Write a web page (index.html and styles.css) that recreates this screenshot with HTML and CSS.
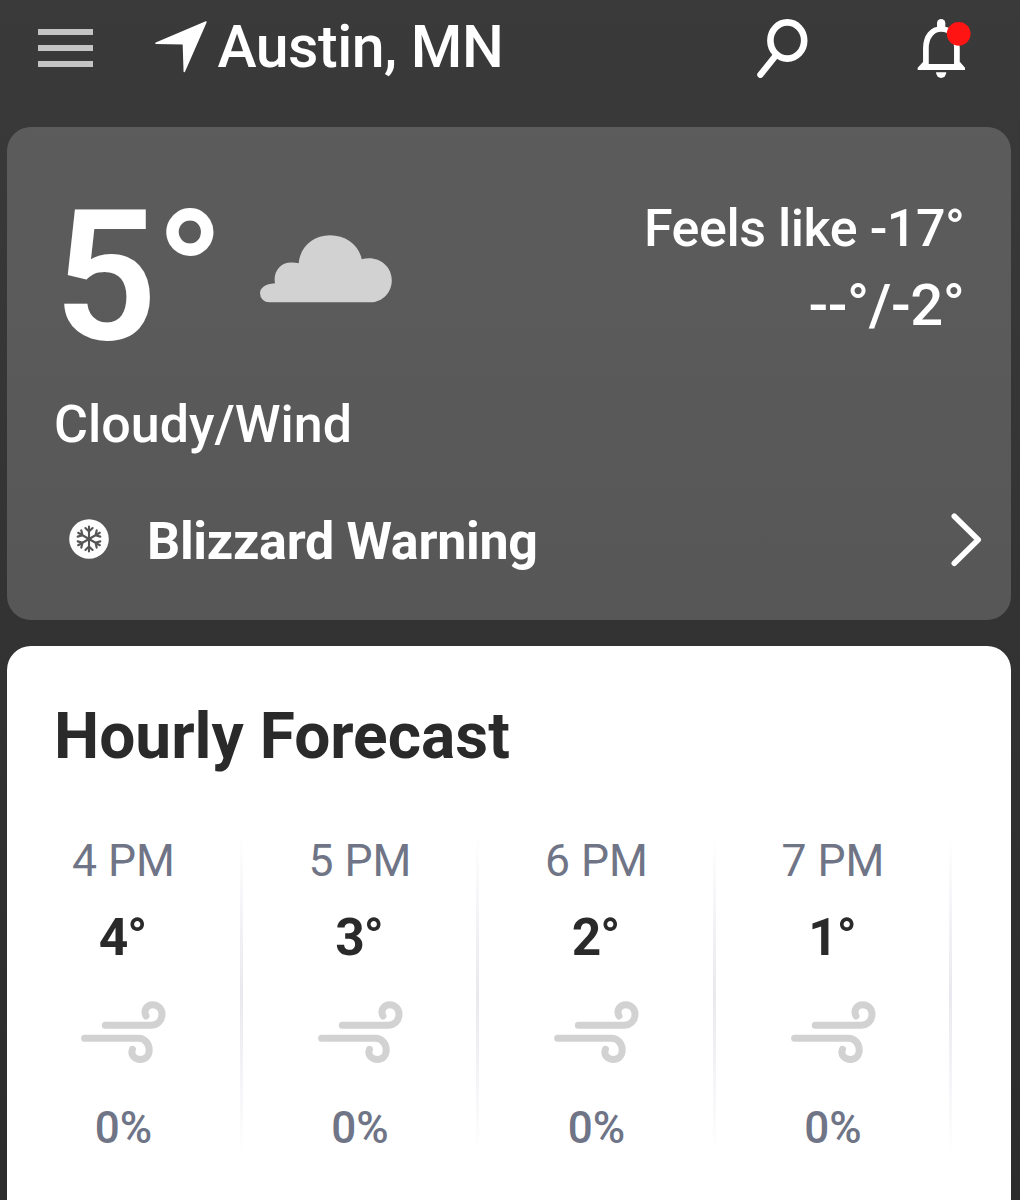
FILE: index.html
```html
<!DOCTYPE html>
<html lang="en">
<head>
  <meta charset="UTF-8" />
  <meta name="viewport" content="width=device-width, initial-scale=1.0"/>
  <title>Austin, MN Weather</title>
  <link rel="stylesheet" href="styles.css">
</head>
<body>

  <!-- shared icons -->
  <svg class="sprite" width="0" height="0">
    <symbol id="wind" viewBox="0 0 85 62">
      <path d="M24.3 24.3H70C76.500 24.300 81 19.500 81 13.300C81 7.800 77 3.700 71.800 3.700C66.300 3.700 62 8.700 65 15M3.600 37.300H57.500C64 37.300 68.200 43 68.200 49C68.200 54.500 64.500 58.400 59.300 58.400C53.800 58.400 49.200 54 51.500 48.300" fill="none" stroke="#d2d2d2" stroke-width="7" stroke-linecap="round"/>
    </symbol>
    <symbol id="arm" viewBox="-20 -20 40 40">
      <path d="M0 0V-12.500M-3.600 -11L0 -7.500L3.600 -11"/>
    </symbol>
  </svg>

  <header class="topbar">
    <button class="menu" aria-label="Menu"><span></span><span></span><span></span></button>
    <svg class="locate" width="52" height="52" viewBox="0 0 52 52">
      <path d="M1 22.200L51 1L29.300 50.500L28.400 22.800Z" fill="#fff" stroke="#fff" stroke-width="1.500" stroke-linejoin="round"/>
    </svg>
    <h1>Austin, MN</h1>
    <svg class="search" width="51" height="60" viewBox="0 0 51 60">
      <ellipse cx="30.300" cy="21.500" rx="16.900" ry="18.100" fill="none" stroke="#fff" stroke-width="6.600"/>
      <path d="M18 37.500L3.400 55.700" stroke="#fff" stroke-width="6.300" stroke-linecap="round"/>
    </svg>
    <svg class="bell" width="54" height="60" viewBox="0 0 54 60">
      <path d="M8.900 47V29C8.900 18 15 10 24.300 10S39.900 18 39.900 29V47" fill="none" stroke="#fff" stroke-width="5.700"/>
      <path d="M.7 51V48.700L6 43L11.700 45H37L43 43L48 48.700V51Z" fill="#fff"/>
      <path d="M20 11V4.200A4.150 4.200 0 0 1 28.300 4.200V11Z" fill="#fff"/>
      <path d="M19 53.300H29.300A5.150 5.700 0 0 1 19 53.300Z" fill="#fff"/>
      <circle cx="41.700" cy="14.800" r="11.900" fill="#ff1414"/>
    </svg>
  </header>

  <section class="card current">
    <div class="now">
      <div class="temp">5°</div>
      <svg class="cloud" width="132" height="68" viewBox="0 0 132 68">
        <path d="M9.200 67.300A9.200 9.200 0 0 1 0 58.200C0 53 5 49 15 48.300C12.800 37 20 27.400 31 27.400C34 27.300 36.500 27.600 38.700 28.300C40 12 53 .300 70 .300C86 .300 99 10 101.700 24.300C117 20 131.800 30 131.800 45.200C131.800 57.500 122.500 67.300 110.500 67.300Z" fill="#d2d2d2"/>
      </svg>
      <div class="range">
        <div class="feels">Feels like -17°</div>
        <div class="hilo">--°/-2°</div>
      </div>
    </div>
    <div class="phrase">Cloudy/Wind</div>
    <div class="alert">
      <svg class="flake" width="40" height="40" viewBox="-20 -20 40 40">
        <circle r="19.800" fill="#fff"/>
        <g fill="none" stroke="#555" stroke-width="2.100" stroke-linecap="round">
          <use href="#arm" x="-20" y="-20" width="40" height="40"/>
          <use href="#arm" x="-20" y="-20" width="40" height="40" transform="rotate(60)"/>
          <use href="#arm" x="-20" y="-20" width="40" height="40" transform="rotate(120)"/>
          <use href="#arm" x="-20" y="-20" width="40" height="40" transform="rotate(180)"/>
          <use href="#arm" x="-20" y="-20" width="40" height="40" transform="rotate(240)"/>
          <use href="#arm" x="-20" y="-20" width="40" height="40" transform="rotate(300)"/>
        </g>
      </svg>
      <span>Blizzard Warning</span>
      <svg class="chevron" width="31" height="54" viewBox="0 0 31 54">
        <path d="M3.300 3.300L27.200 26.700L3.300 50.200" fill="none" stroke="#fff" stroke-width="5.600" stroke-linecap="round" stroke-linejoin="round"/>
      </svg>
    </div>
  </section>

  <section class="card hourly">
    <h2>Hourly Forecast</h2>
    <div class="hours">
      <div class="hour">
        <div class="time">4 PM</div>
        <div class="deg">4°</div>
        <svg width="85" height="62"><use href="#wind"/></svg>
        <div class="rain">0%</div>
      </div>
      <div class="hour">
        <div class="time">5 PM</div>
        <div class="deg">3°</div>
        <svg width="85" height="62"><use href="#wind"/></svg>
        <div class="rain">0%</div>
      </div>
      <div class="hour">
        <div class="time">6 PM</div>
        <div class="deg">2°</div>
        <svg width="85" height="62"><use href="#wind"/></svg>
        <div class="rain">0%</div>
      </div>
      <div class="hour">
        <div class="time">7 PM</div>
        <div class="deg">1°</div>
        <svg width="85" height="62"><use href="#wind"/></svg>
        <div class="rain">0%</div>
      </div>
    </div>
  </section>

</body>
</html>
```
FILE: styles.css
```css
* {
  box-sizing: border-box;
}

body {
  display: flex;
  flex-direction: column;
  margin: 0;
  height: 1200px;
  background: linear-gradient(#3a3a3a, #2c2c2c);
  font-family: Roboto, sans-serif;
  color: #fff;
}

svg {
  display: block;
  flex: none;
}

.sprite {
  position: absolute;
}

h1, h2 {
  margin: 0;
}

/* top bar */
.topbar {
  display: flex;
  align-items: center;
  height: 94px;
  padding: 0 49px 0 38px;
  margin-bottom: 33px;
}

.menu {
  display: flex;
  flex-direction: column;
  justify-content: space-between;
  width: 55px;
  height: 38px;
  margin-top: 1px;
  padding: 0;
  border: none;
  background: none;
}

.menu span {
  height: 6px;
  background: #c4c4c4;
}

.locate {
  margin-left: 62px;
}

h1 {
  margin-left: 10.5px;
  font-size: 59px;
  font-weight: 500;
  line-height: 70px;
  letter-spacing: -0.5px;
  white-space: nowrap;
}

.search {
  margin-left: auto;
  margin-top: 4px;
}

.bell {
  margin-left: 109px;
  margin-top: 4px;
}

/* cards */
.card {
  margin: 0 9px 0 7px;
  border-radius: 24px;
}

.current {
  height: 493px;
  margin-bottom: 26px;
  padding: 50px 30px 0 47px;
  background: rgba(255, 255, 255, 0.18);
}

.now {
  display: flex;
  align-items: flex-start;
  height: 200px;
}

.temp {
  width: 206px;
  font-size: 181px;
  font-weight: 600;
  line-height: 200px;
  letter-spacing: -2.5px;
  white-space: nowrap;
}

.cloud {
  margin-top: 58px;
}

.range {
  margin-left: auto;
  padding: 14px 16.5px 0 0;
  text-align: right;
  line-height: 76px;
  font-weight: 500;
  letter-spacing: -0.45px;
}

.feels {
  font-size: 52px;
}

.hilo {
  font-size: 58px;
}

.phrase {
  margin-top: 18px;
  font-size: 52px;
  font-weight: 500;
  line-height: 60px;
}

.alert {
  display: flex;
  align-items: center;
  margin-top: 57px;
  padding-left: 15px;
  font-size: 52px;
  font-weight: 700;
  line-height: 60px;
  letter-spacing: -0.3px;
}

.alert span {
  margin-left: 38px;
}

.flake {
  margin-top: -6px;
}

.chevron {
  margin-left: auto;
  margin-right: -1px;
  margin-top: -5px;
}

/* hourly */
.hourly {
  flex: 1;
  padding-top: 51px;
  border-radius: 24px 24px 0 0;
  background: #fff;
  color: #2a2a2a;
}

h2 {
  padding-left: 47px;
  font-size: 64px;
  font-weight: 700;
  line-height: 80px;
}

.hours {
  display: grid;
  grid-template-columns: repeat(4, 236.5px);
  margin: 59px 0 0 -1px;
}

.hour {
  display: flex;
  flex-direction: column;
  align-items: center;
  padding-right: 1.5px;
  background: linear-gradient(rgba(232, 232, 238, 0), #e8e8ee 50%, rgba(232, 232, 238, 0)) right / 3px 100% no-repeat;
}

.time {
  font-size: 44.5px;
  line-height: 50px;
  color: #6f7586;
}

.deg {
  margin: 22px 2px 33px 0;
  font-size: 51.5px;
  font-weight: 700;
  line-height: 60px;
  letter-spacing: -1px;
}

.rain {
  margin-top: 40px;
  font-size: 44px;
  font-weight: 500;
  line-height: 50px;
  color: #6f7586;
}
```
